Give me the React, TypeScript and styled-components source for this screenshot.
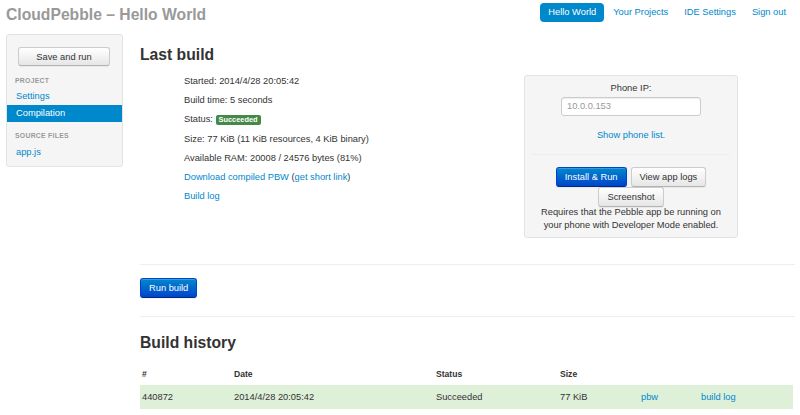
import styled, { createGlobalStyle } from "styled-components"

const GlobalStyle = createGlobalStyle`
    body {
        margin: 0;
        background: #fff;
        font-family: "Liberation Sans", Arial, sans-serif;
        font-size: 9.3px;
        color: #333;
    }
    a { color: #0088cc; text-decoration: none; }
`

const TopBar = styled.div`
    height: 34px;
    display: flex;
    align-items: center;
    justify-content: space-between;
    padding: 0 6px;
`

const Brand = styled.div`
    font-size: 15.7px;
    font-weight: bold;
    color: #999;
    margin-top: -4px;
`

const Nav = styled.div`
    display: flex;
    align-items: center;
    margin-top: -9px;
`

const NavItem = styled.a<{ $active?: boolean }>`
    padding: 4px 8px;
    border-radius: 4px;
    font-size: 9.3px;
    line-height: 11px;
    color: ${p => (p.$active ? "#fff" : "#0088cc")};
    background: ${p => (p.$active ? "#0088cc" : "transparent")};
    margin-right: ${p => (p.$active ? "1px" : "0")};
`

const Layout = styled.div`
    display: flex;
    align-items: flex-start;
    padding-left: 6px;
`

const Sidebar = styled.div`
    width: 115px;
    background: #f5f5f5;
    border: 1px solid #e3e3e3;
    border-radius: 3px;
    padding: 12px 0 5px;
`

const DefaultButton = styled.button`
    height: 20px;
    padding: 0 8px;
    font-family: inherit;
    font-size: 9.3px;
    color: #333;
    background: linear-gradient(#ffffff, #e6e6e6);
    border: 1px solid #ccc;
    border-bottom-color: #b3b3b3;
    border-radius: 3px;
    box-shadow: inset 0 1px 0 rgba(255, 255, 255, 0.2), 0 1px 1px rgba(0, 0, 0, 0.05);
`

const PrimaryButton = styled(DefaultButton)`
    color: #fff;
    background: linear-gradient(#0088cc, #0044cc);
    border-color: #0044cc #0044cc #002a80;
`

const SaveButton = styled(DefaultButton)`
    display: block;
    margin-left: 11px;
    width: 92px;
    height: 19px;
`

const NavHeader = styled.div<{ $top: number }>`
    font-size: 6.8px;
    font-weight: bold;
    text-transform: uppercase;
    color: #999;
    letter-spacing: 0.3px;
    padding: 0 8px;
    line-height: 12px;
    margin-top: ${p => p.$top}px;
`

const SideLink = styled.a<{ $active?: boolean; $top?: number }>`
    display: block;
    padding: 0 9px;
    line-height: 17px;
    font-size: 9.3px;
    margin-top: ${p => p.$top ?? 0}px;
    color: ${p => (p.$active ? "#fff" : "#0088cc")};
    background: ${p => (p.$active ? "#0088cc" : "transparent")};
`

const Main = styled.div`
    width: 655px;
    margin-left: 17px;
`

const Heading = styled.h2<{ $top: number }>`
    font-size: 15.7px;
    font-weight: bold;
    margin: ${p => p.$top}px 0 0;
    line-height: 24px;
    color: #333;
`

const BuildRow = styled.div`
    display: flex;
    align-items: flex-start;
    margin-top: 5px;
`

const Info = styled.div`
    width: 340px;
    padding-left: 44px;
`

const InfoLine = styled.div`
    line-height: 19.2px;
`

const Badge = styled.span`
    display: inline-block;
    background: #468847;
    color: #fff;
    font-size: 7.4px;
    font-weight: bold;
    padding: 1px 3px;
    border-radius: 2px;
    line-height: 8px;
    vertical-align: 0;
`

const Panel = styled.div`
    width: 212px;
    margin-top: 3px;
    background: #f5f5f5;
    border: 1px solid #e3e3e3;
    border-radius: 3px;
    padding: 5px 0 5px;
    text-align: center;
`

const PanelLabel = styled.div`
    line-height: 14px;
`

const Input = styled.div`
    width: 133px;
    height: 17px;
    margin: 2px auto 0;
    background: #fff;
    border: 1px solid #ccc;
    border-radius: 3px;
    color: #999;
    text-align: left;
    padding-left: 5px;
    line-height: 17px;
    box-shadow: inset 0 1px 1px rgba(0, 0, 0, 0.075);
`

const PanelLink = styled.a`
    display: block;
    margin-top: 12px;
    line-height: 14px;
`

const Divider = styled.div<{ $inset?: number; $top?: number }>`
    height: 1px;
    background: #eee;
    margin: ${p => `${p.$top ?? 0}px ${p.$inset ?? 0}px 0`};
`

const Buttons = styled.div`
    display: flex;
    flex-wrap: wrap;
    justify-content: center;
    column-gap: 4px;
    width: 156px;
    margin: 12px auto 0;
`

const Note = styled.div`
    margin-top: -1px;
    line-height: 13px;
`

const ActionBar = styled.div`
    padding: 13px 0 18px;
`

const Table = styled.table`
    width: 653px;
    table-layout: fixed;
    border-collapse: collapse;
    margin-top: 8px;
`

const Th = styled.th<{ $w?: number }>`
    text-align: left;
    font-size: 8.6px;
    font-weight: bold;
    padding: 0 2px;
    height: 22px;
    width: ${p => (p.$w ? p.$w + "px" : "auto")};
`

const Row = styled.tr`
    background: #dff0d8;
`

const Td = styled.td`
    padding: 0 2px;
    height: 24px;
    font-size: 9.3px;
`

export default function App() {
    return <>
        <GlobalStyle />
        <TopBar>
            <Brand>CloudPebble – Hello World</Brand>
            <Nav>
                <NavItem $active>Hello World</NavItem>
                <NavItem>Your Projects</NavItem>
                <NavItem>IDE Settings</NavItem>
                <NavItem>Sign out</NavItem>
            </Nav>
        </TopBar>
        <Layout>
            <Sidebar>
                <SaveButton>Save and run</SaveButton>
                <NavHeader $top={9}>Project</NavHeader>
                <SideLink $top={1}>Settings</SideLink>
                <SideLink $active>Compilation</SideLink>
                <NavHeader $top={8}>Source files</NavHeader>
                <SideLink $top={2}>app.js</SideLink>
            </Sidebar>
            <Main>
                <Heading $top={9}>Last build</Heading>
                <BuildRow>
                    <Info>
                        <InfoLine>Started: 2014/4/28 20:05:42</InfoLine>
                        <InfoLine>Build time: 5 seconds</InfoLine>
                        <InfoLine>Status: <Badge>Succeeded</Badge></InfoLine>
                        <InfoLine>Size: 77 KiB (11 KiB resources, 4 KiB binary)</InfoLine>
                        <InfoLine>Available RAM: 20008 / 24576 bytes (81%)</InfoLine>
                        <InfoLine><a>Download compiled PBW</a> (<a>get short link</a>)</InfoLine>
                        <InfoLine><a>Build log</a></InfoLine>
                    </Info>
                    <Panel>
                        <PanelLabel>Phone IP:</PanelLabel>
                        <Input>10.0.0.153</Input>
                        <PanelLink>Show phone list.</PanelLink>
                        <Divider $inset={7} $top={12} />
                        <Buttons>
                            <PrimaryButton>Install &amp; Run</PrimaryButton>
                            <DefaultButton>View app logs</DefaultButton>
                            <DefaultButton>Screenshot</DefaultButton>
                        </Buttons>
                        <Note>Requires that the Pebble app be running on<br />your phone with Developer Mode enabled.</Note>
                    </Panel>
                </BuildRow>
                <Divider $top={26} />
                <ActionBar>
                    <PrimaryButton>Run build</PrimaryButton>
                </ActionBar>
                <Divider />
                <Heading $top={14}>Build history</Heading>
                <Table>
                    <thead>
                        <tr>
                            <Th $w={88}>#</Th>
                            <Th $w={198}>Date</Th>
                            <Th $w={120}>Status</Th>
                            <Th $w={77}>Size</Th>
                            <Th $w={56}></Th>
                            <Th></Th>
                        </tr>
                    </thead>
                    <tbody>
                        <Row>
                            <Td>440872</Td>
                            <Td>2014/4/28 20:05:42</Td>
                            <Td>Succeeded</Td>
                            <Td>77 KiB</Td>
                            <Td><a>pbw</a></Td>
                            <Td><a>build log</a></Td>
                        </Row>
                    </tbody>
                </Table>
            </Main>
        </Layout>
    </>
}
